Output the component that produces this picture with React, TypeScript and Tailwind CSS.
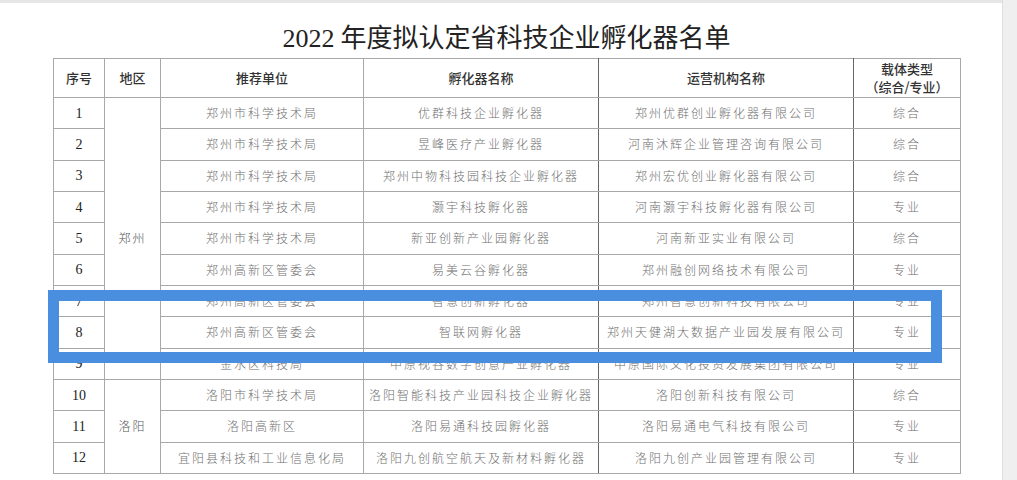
import React from "react";

type Row = {
  no: number;
  unit: string;
  name: string;
  org: string;
  kind: string;
};

const rows: Row[] = [
  { no: 1, unit: "郑州市科学技术局", name: "优群科技企业孵化器", org: "郑州优群创业孵化器有限公司", kind: "综合" },
  { no: 2, unit: "郑州市科学技术局", name: "昱峰医疗产业孵化器", org: "河南沐辉企业管理咨询有限公司", kind: "综合" },
  { no: 3, unit: "郑州市科学技术局", name: "郑州中物科技园科技企业孵化器", org: "郑州宏优创业孵化器有限公司", kind: "综合" },
  { no: 4, unit: "郑州市科学技术局", name: "灏宇科技孵化器", org: "河南灏宇科技孵化器有限公司", kind: "专业" },
  { no: 5, unit: "郑州市科学技术局", name: "新亚创新产业园孵化器", org: "河南新亚实业有限公司", kind: "综合" },
  { no: 6, unit: "郑州高新区管委会", name: "易美云谷孵化器", org: "郑州融创网络技术有限公司", kind: "专业" },
  { no: 7, unit: "郑州高新区管委会", name: "智慧创新孵化器", org: "郑州智慧创新科技有限公司", kind: "专业" },
  { no: 8, unit: "郑州高新区管委会", name: "智联网孵化器", org: "郑州天健湖大数据产业园发展有限公司", kind: "专业" },
  { no: 9, unit: "金水区科技局", name: "中原视谷数字创意产业孵化器", org: "中原国际文化投资发展集团有限公司", kind: "专业" },
  { no: 10, unit: "洛阳市科学技术局", name: "洛阳智能科技产业园科技企业孵化器", org: "洛阳创新科技有限公司", kind: "综合" },
  { no: 11, unit: "洛阳高新区", name: "洛阳易通科技园孵化器", org: "洛阳易通电气科技有限公司", kind: "专业" },
  { no: 12, unit: "宜阳县科技和工业信息化局", name: "洛阳九创航空航天及新材料孵化器", org: "洛阳九创产业园管理有限公司", kind: "专业" },
];

const cjk = "font-['Noto_Sans_CJK_SC',sans-serif]";
const cell = "border border-[#a8a8a8] text-center align-middle p-0";
const body = `${cell} text-[12px] tracking-[2px] text-[#6f6f6f] font-light`;
const head = `${cell} text-[13px] font-medium text-[#333]`;

export default function App() {
  return (
    <div className={`w-full h-[480px] flex bg-white ${cjk}`}>
      <div className="flex-1 border-t-[3px] border-[#e6e6e6] pl-[53px] relative">
        <h1 className="w-[907px] h-[55px] pt-[20px] text-center text-[26px] leading-[26px] text-[#222] font-normal">
          <span className="font-['Liberation_Serif',serif]">2022</span> 年度拟认定省科技企业孵化器名单
        </h1>

        <table className="w-[907px] border-collapse table-fixed">
          <colgroup>
            <col className="w-[51px]" />
            <col className="w-[56px]" />
            <col className="w-[203px]" />
            <col className="w-[235px]" />
            <col className="w-[255px]" />
            <col className="w-[107px]" />
          </colgroup>
          <thead>
            <tr className="h-[39px]">
              <th className={head}>序号</th>
              <th className={head}>地区</th>
              <th className={head}>推荐单位</th>
              <th className={`${head} border-r-[#666]`}>孵化器名称</th>
              <th className={`${head} border-r-[#666]`}>运营机构名称</th>
              <th className={`${head} leading-[18px]`}>
                载体类型
                <br />
                （综合/专业）
              </th>
            </tr>
          </thead>
          <tbody>
            {rows.map((r) => (
              <tr key={r.no} className="h-[31.33px]">
                <td className={`${cell} text-[14px] text-[#222] font-['Liberation_Serif',serif]`}>{r.no}</td>
                {r.no === 1 && (
                  <td rowSpan={9} className={`${body} text-[#555]`}>
                    郑州
                  </td>
                )}
                {r.no === 10 && (
                  <td rowSpan={3} className={`${body} text-[#555]`}>
                    洛阳
                  </td>
                )}
                <td className={body}>{r.unit}</td>
                <td className={`${body} border-r-[#666]`}>{r.name}</td>
                <td className={`${body} border-r-[#666]`}>{r.org}</td>
                <td className={body}>{r.kind}</td>
              </tr>
            ))}
          </tbody>
        </table>

        {/* blue highlight drawn over row 8 */}
        <div className="absolute left-[48px] top-[287px] w-[894px] h-[73px] border-[11px] border-[#4a8ee0]" />
      </div>
      <div className="w-[15px] h-full bg-[#efefef] border-l border-[#dedede]" />
    </div>
  );
}
